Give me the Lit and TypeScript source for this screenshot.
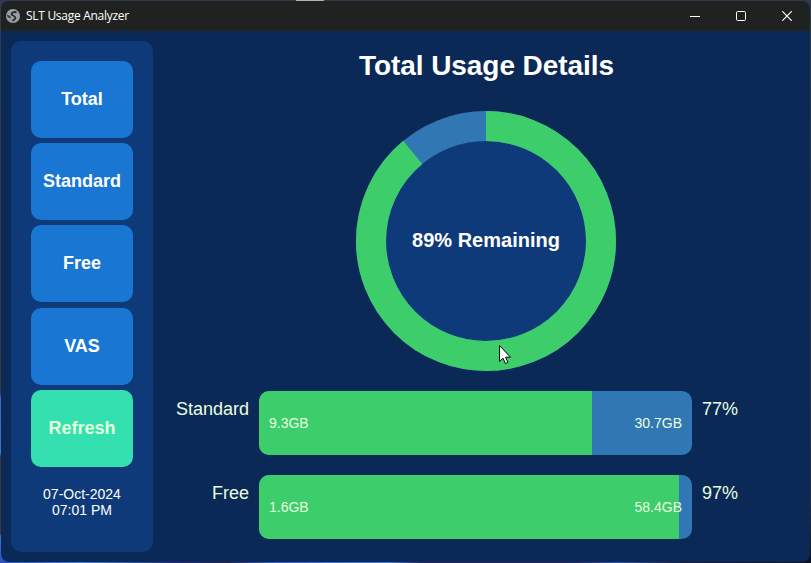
import { LitElement, html, css } from "lit";
import { customElement, property } from "lit/decorators.js";
import { classMap } from "lit/directives/class-map.js";

@customElement("title-bar")
class TitleBar extends LitElement {
  static styles = css`
    :host { display: flex; height: 30px; background: #202221; color: #fff; }
    .app { display: flex; align-items: center; flex: 1; padding-left: 5px; gap: 6px; }
    .name { font: 12px/16px "Open Sans", "Noto Sans", sans-serif; white-space: nowrap; letter-spacing: -0.29px; }
    .control { width: 46px; display: grid; place-items: center; }
    svg { display: block; }
  `;
  render() {
    return html`
      <div class="app">
        <svg width="14" height="14" viewBox="0 0 14 14">
          <circle cx="7" cy="7" r="7" fill="#9b9fa5" />
          <path d="M10.6 3.4C8 2.4 5.6 3.6 5.6 5.2S9.6 6.8 9.4 8.8 7.4 10.8 6.4 12" fill="none" stroke="#292c2e" stroke-width="1.9" />
          <path d="M.8 5.6 3.6 6.8 5.2 8.8 4.2 9.4 1.6 8Z" fill="#3b3f42" />
        </svg>
        <span class="name">SLT Usage Analyzer</span>
      </div>
      <div class="control">
        <svg width="10" height="10"><path d="M0 5.5H10" stroke="#fff" /></svg>
      </div>
      <div class="control">
        <svg width="10" height="10"><rect x=".5" y=".5" width="9" height="9" rx="1.2" fill="none" stroke="#fff" /></svg>
      </div>
      <div class="control">
        <svg width="10" height="10"><path d="M.3 .3 9.7 9.7M9.7 .3 .3 9.7" stroke="#fff" stroke-width="1.2" /></svg>
      </div>
    `;
  }
}

@customElement("side-nav")
class SideNav extends LitElement {
  static styles = css`
    :host {
      display: flex; flex-direction: column; flex: none; box-sizing: border-box; width: 142px; height: 511px;
      padding: 20px; gap: 5.2px; border-radius: 10px; background: #0f3a79;
    }
    button {
      height: 77px; flex: none; margin: 0; padding: 0 0 1px; border: 0; border-radius: 10px;
      background: #1976d2; color: #fff; font: bold 18px/20px "Liberation Sans", Arial, sans-serif;
    }
    .refresh { background: #34e0af; color: #e4ffdb; }
    .stamp { margin-top: 14px; text-align: center; color: #fff; font-size: 14px; line-height: 16px; }
  `;
  render() {
    return html`
      ${["Total", "Standard", "Free", "VAS", "Refresh"].map(
        (name) => html`<button class=${classMap({ refresh: name === "Refresh" })}>${name}</button>`
      )}
      <div class="stamp">07-Oct-2024<br />07:01 PM</div>
    `;
  }
}

@customElement("usage-ring")
class UsageRing extends LitElement {
  @property({ type: Number }) percent = 0;
  static styles = css`
    :host { display: grid; width: 260px; height: 260px; }
    svg, .label { grid-area: 1 / 1; }
    svg { display: block; }
    .label { place-self: center; margin-top: -2px; font-size: 20px; line-height: 22px; font-weight: bold; color: #fff; white-space: nowrap; }
  `;
  render() {
    return html`
      <svg width="260" height="260" viewBox="0 0 260 260">
        <circle cx="130" cy="130" r="100.5" fill="#0f3a79" />
        <circle cx="130" cy="130" r="115" fill="none" stroke="#3177b3" stroke-width="30" />
        <circle cx="130" cy="130" r="115" fill="none" stroke="#3dcd6a" stroke-width="30"
          pathLength="100" stroke-dasharray="${this.percent} 100" transform="rotate(-90 130 130)" />
      </svg>
      <span class="label">${this.percent}% Remaining</span>
    `;
  }
}

@customElement("usage-row")
class UsageRow extends LitElement {
  @property() name = "";
  @property() used = "";
  @property() left = "";
  @property({ type: Number }) percent = 0;
  static styles = css`
    :host { display: flex; gap: 10px; height: 64px; color: #e8ffe0; }
    .name, .percent { font-size: 18px; line-height: 20px; padding-top: 8px; }
    .name { width: 86px; text-align: right; }
    .bar { display: grid; width: 433px; border-radius: 10px; overflow: hidden; background: #3177b3; }
    .fill, .values { grid-area: 1 / 1; }
    .fill { background: #3dcd6a; }
    .values { display: flex; justify-content: space-between; align-items: center; padding: 0 10px; font-size: 14px; line-height: 16px; }
  `;
  render() {
    return html`
      <div class="name">${this.name}</div>
      <div class="bar">
        <div class="fill" style="width:${this.percent}%"></div>
        <div class="values"><span>${this.used}</span><span>${this.left}</span></div>
      </div>
      <div class="percent">${this.percent}%</div>
    `;
  }
}

@customElement("app-root")
class AppRoot extends LitElement {
  static styles = css`
    :host {
      display: block; position: relative; box-sizing: border-box; width: 811px; height: 563px; overflow: hidden;
      padding: 1px; font-family: "Liberation Sans", Arial, sans-serif;
      background:
        linear-gradient(90deg, #2b50c8, #3f7fd8 10%, #232a78 22%, #2a1f50 28%, #3264c8 34%, #3f7fd8 48%, #28205c 52%, #28205c 70%, #3050b0 76%, #201c40 84%, #10121c) 0 100% / 100% 1px no-repeat,
        linear-gradient(90deg, #2f3b4c 296px, #aab1b0 296px, #aab1b0 324px, #2f3b4c 324px) 0 0 / 100% 1px no-repeat,
        linear-gradient(#2f3b4c, #2a2c3a 500px, #10121c) 100% 0 / 9px 100% no-repeat,
        linear-gradient(#2f3b4c 0, #3a3c40 395px, #3f62c8 396px, #3f72d0 453px, #3a3c40 456px, #3a3c40 534px, #3f72d0 536px, #2b50c8);
    }
    .window { height: 561px; border-radius: 8px; overflow: hidden; background: #0b2956; }
    .content { display: flex; gap: 10px; padding: 10px 1px 10px 10px; }
    .details { flex: 1; }
    h1 { margin: 9px 0 0; padding-left: 1px; font-size: 28px; line-height: 32px; letter-spacing: -0.07px; color: #fff; text-align: center; }
    .ring { display: flex; justify-content: center; margin: 29px 0 20px; }
    .rows { display: grid; gap: 20px; }
    .cursor { position: absolute; left: 498px; top: 344px; }
  `;
  render() {
    return html`
      <div class="window">
        <title-bar></title-bar>
        <div class="content">
          <side-nav></side-nav>
          <main class="details">
            <h1>Total Usage Details</h1>
            <div class="ring"><usage-ring percent="89"></usage-ring></div>
            <div class="rows">
              <usage-row name="Standard" used="9.3GB" left="30.7GB" percent="77"></usage-row>
              <usage-row name="Free" used="1.6GB" left="58.4GB" percent="97"></usage-row>
            </div>
          </main>
        </div>
      </div>
      <svg class="cursor" width="14" height="21" viewBox="0 0 14 21">
        <path d="M1.5 1.5V17.5L5 14.2 7.4 19.5 9.9 18.4 7.6 13.2H12.5Z" fill="#fff" stroke="#000" />
      </svg>
    `;
  }
}
